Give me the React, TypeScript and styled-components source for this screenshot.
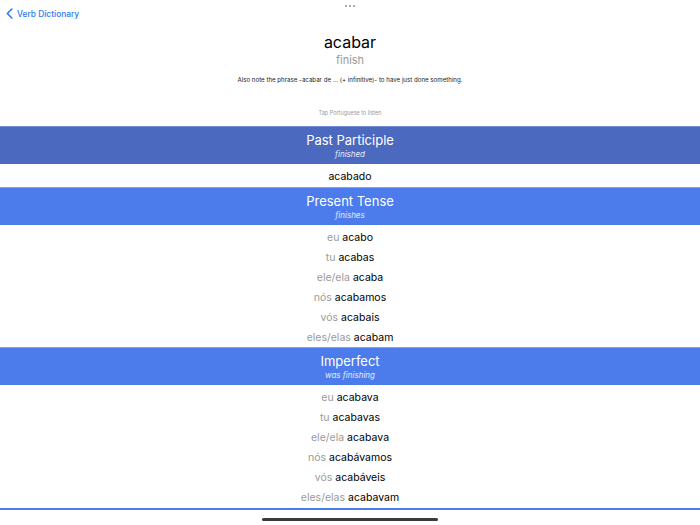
import React from "react";
import styled, { createGlobalStyle } from "styled-components";

const GlobalStyle = createGlobalStyle`
  html, body {
    margin: 0;
    padding: 0;
    background: #ffffff;
    font-family: Inter, "Liberation Sans", sans-serif;
    -webkit-font-smoothing: antialiased;
  }
`;

const Screen = styled.div`
  width: 700px;
  height: 525px;
  display: flex;
  flex-direction: column;
  overflow: hidden;
  background: #ffffff;
`;

const NavBar = styled.div`
  position: relative;
  height: 26px;
  display: flex;
  align-items: center;
  padding: 0 6px;
`;

const BackLink = styled.a`
  display: flex;
  align-items: center;
  gap: 4px;
  color: #2a7af5;
  font-size: 8.4px;
  font-weight: 500;
  text-decoration: none;
  margin-top: 1px;
`;

const Grabber = styled.div`
  position: absolute;
  top: 5px;
  left: 50%;
  transform: translateX(-50%);
  display: flex;
  gap: 2px;
`;

const Dot = styled.span`
  width: 2px;
  height: 2px;
  border-radius: 50%;
  background: #8e8e93;
`;

const Header = styled.div`
  display: flex;
  flex-direction: column;
  align-items: center;
  padding-top: 5px;
  height: 100px;
  box-sizing: border-box;
`;

const Verb = styled.h1`
  margin: 0;
  font-size: 16px;
  font-weight: 400;
  color: #000000;
  line-height: 22px;
`;

const Meaning = styled.div`
  font-size: 11px;
  color: #9a9a9a;
  line-height: 14px;
`;

const Note = styled.div`
  margin-top: 9px;
  font-size: 6.15px;
  color: #222222;
`;

const Hint = styled.div`
  margin-top: auto;
  margin-bottom: 10px;
  font-size: 5.5px;
  color: #9a9a9a;
`;

const List = styled.div`
  flex: 1;
  overflow: hidden;
`;

const Band = styled.div<{ $dark?: boolean }>`
  height: 38px;
  box-sizing: border-box;
  background: ${(p) => (p.$dark ? "#4b69bf" : "#4c7ceb")};
  border-top: 1px solid ${(p) => (p.$dark ? "#6f8ad2" : "#7fa2f2")};
  display: flex;
  flex-direction: column;
  align-items: center;
  justify-content: center;
  color: #ffffff;
`;

const BandTitle = styled.div`
  font-size: 13px;
  line-height: 17px;
`;

const BandSub = styled.div`
  font-size: 8px;
  font-style: italic;
  color: #e4ebfb;
  line-height: 10px;
`;

const Rows = styled.div<{ $single?: boolean }>`
  padding: ${(p) => (p.$single ? "2px 0 1px" : "2px 0 0")};
`;

const Row = styled.div`
  height: 20px;
  display: flex;
  justify-content: center;
  align-items: center;
  gap: 3px;
  font-size: 10.5px;
`;

const Pronoun = styled.span`
  color: #9a9a9a;
`;

const Form = styled.span`
  color: #000000;
`;

const Footer = styled.div`
  height: 17px;
  flex-shrink: 0;
  background: #ffffff;
  display: flex;
  justify-content: center;
  align-items: flex-start;
  padding-top: 8px;
  box-sizing: border-box;
  border-top: 2px solid #4c7ceb;
`;

const HomeBar = styled.div`
  width: 176px;
  height: 3px;
  border-radius: 2px;
  background: #3a3a3c;
`;

type Tense = {
  name: string;
  gloss: string;
  dark?: boolean;
  forms: [string, string][];
};

const tenses: Tense[] = [
  {
    name: "Past Participle",
    gloss: "finished",
    dark: true,
    forms: [["", "acabado"]],
  },
  {
    name: "Present Tense",
    gloss: "finishes",
    forms: [
      ["eu", "acabo"],
      ["tu", "acabas"],
      ["ele/ela", "acaba"],
      ["nós", "acabamos"],
      ["vós", "acabais"],
      ["eles/elas", "acabam"],
    ],
  },
  {
    name: "Imperfect",
    gloss: "was finishing",
    forms: [
      ["eu", "acabava"],
      ["tu", "acabavas"],
      ["ele/ela", "acabava"],
      ["nós", "acabávamos"],
      ["vós", "acabáveis"],
      ["eles/elas", "acabavam"],
    ],
  },
];

export default function App() {
  return (
    <>
      <GlobalStyle />
      <Screen>
        <NavBar>
          <BackLink href="#">
            <svg width="7" height="11" viewBox="0 0 7 11" fill="none">
              <path
                d="M5.8 1 1.4 5.5l4.4 4.5"
                stroke="#2a7af5"
                strokeWidth="1.6"
                strokeLinecap="round"
                strokeLinejoin="round"
              />
            </svg>
            Verb Dictionary
          </BackLink>
          <Grabber>
            <Dot />
            <Dot />
            <Dot />
          </Grabber>
        </NavBar>
        <Header>
          <Verb>acabar</Verb>
          <Meaning>finish</Meaning>
          <Note>
            Also note the phrase -acabar de ... (+ infinitive)- to have just
            done something.
          </Note>
          <Hint>Tap Portuguese to listen</Hint>
        </Header>
        <List>
          {tenses.map((t) => (
            <section key={t.name}>
              <Band $dark={t.dark}>
                <BandTitle>{t.name}</BandTitle>
                <BandSub>{t.gloss}</BandSub>
              </Band>
              <Rows $single={t.forms.length === 1}>
                {t.forms.map(([p, f]) => (
                  <Row key={p + f}>
                    {p && <Pronoun>{p}</Pronoun>}
                    <Form>{f}</Form>
                  </Row>
                ))}
              </Rows>
            </section>
          ))}
        </List>
        <Footer>
          <HomeBar />
        </Footer>
      </Screen>
    </>
  );
}
